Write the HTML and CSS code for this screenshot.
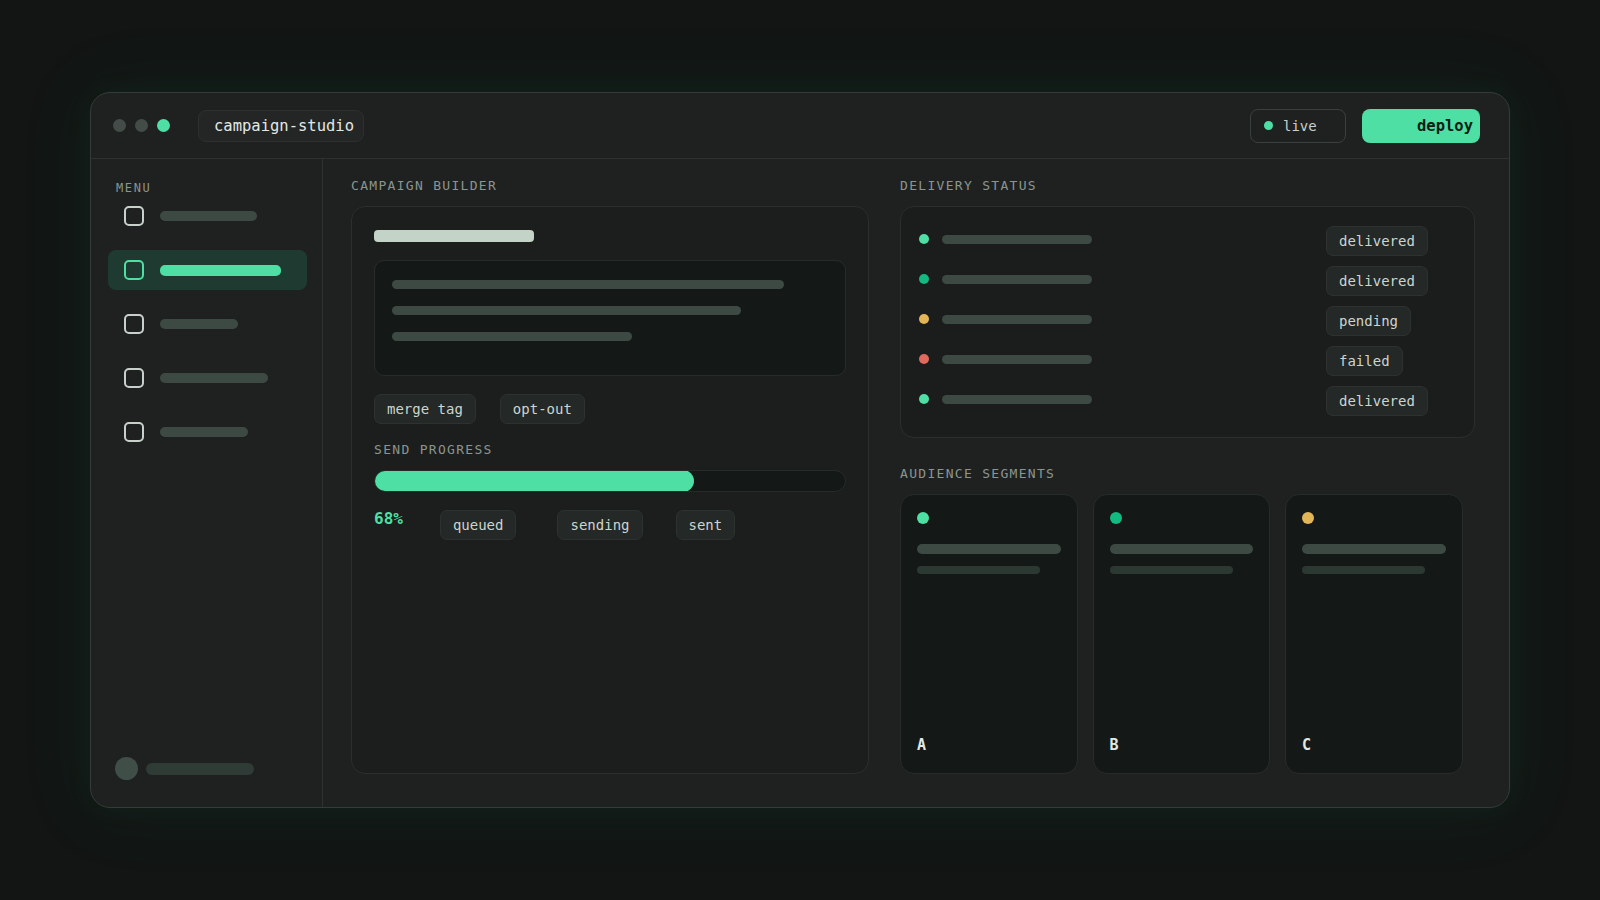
FILE: index.html
```html
<!DOCTYPE html>
<html>
<head>
<meta charset="utf-8">
<link rel="stylesheet" href="styles.css">
</head>
<body>
<div class="window">
  <header class="titlebar">
    <div class="dots">
      <span class="dot"></span><span class="dot"></span><span class="dot dot-on"></span>
    </div>
    <div class="title-pill">campaign-studio</div>
    <div class="spacer"></div>
    <div class="live"><span class="live-dot"></span>live</div>
    <button class="deploy">deploy</button>
  </header>
  <div class="body">
    <aside class="sidebar">
      <div class="menu-label">MENU</div>
      <div class="menu-item"><span class="mi-icon"></span><span class="mi-bar" style="width:97px"></span></div>
      <div class="menu-item active"><span class="mi-icon"></span><span class="mi-bar" style="width:121px"></span></div>
      <div class="menu-item"><span class="mi-icon"></span><span class="mi-bar" style="width:78px"></span></div>
      <div class="menu-item"><span class="mi-icon"></span><span class="mi-bar" style="width:108px"></span></div>
      <div class="menu-item"><span class="mi-icon"></span><span class="mi-bar" style="width:88px"></span></div>
      <div class="side-footer"><span class="avatar"></span><span class="footer-bar"></span></div>
    </aside>
    <main class="main">
      <section class="col">
        <div class="section-label">CAMPAIGN BUILDER</div>
        <div class="card builder">
          <div class="builder-title"></div>
          <div class="textbox">
            <div class="line" style="width:392px"></div>
            <div class="line" style="width:349px"></div>
            <div class="line" style="width:240px"></div>
          </div>
          <div class="tags">
            <span class="chip">merge tag</span>
            <span class="chip">opt-out</span>
          </div>
          <div class="section-label progress-label">SEND PROGRESS</div>
          <div class="progress"><div class="progress-fill" style="width:68%"></div></div>
          <div class="progress-row">
            <span class="pct">68%</span>
            <span class="chip">queued</span>
            <span class="chip chip-sending">sending</span>
            <span class="chip chip-sent">sent</span>
          </div>
        </div>
      </section>
      <section class="col">
        <div class="section-label">DELIVERY STATUS</div>
        <div class="card status">
          <div class="status-row"><span class="sdot green"></span><span class="sbar"></span><span></span><span class="chip">delivered</span></div>
          <div class="status-row"><span class="sdot emerald"></span><span class="sbar"></span><span></span><span class="chip">delivered</span></div>
          <div class="status-row"><span class="sdot yellow"></span><span class="sbar"></span><span></span><span class="chip">pending</span></div>
          <div class="status-row"><span class="sdot red"></span><span class="sbar"></span><span></span><span class="chip">failed</span></div>
          <div class="status-row"><span class="sdot green"></span><span class="sbar"></span><span></span><span class="chip">delivered</span></div>
        </div>
        <div class="section-label seg-label">AUDIENCE SEGMENTS</div>
        <div class="segments">
          <div class="seg"><span class="seg-dot green"></span><span class="seg-bar1"></span><span class="seg-bar2"></span><span class="seg-name">A</span></div>
          <div class="seg"><span class="seg-dot emerald"></span><span class="seg-bar1"></span><span class="seg-bar2"></span><span class="seg-name">B</span></div>
          <div class="seg"><span class="seg-dot yellow"></span><span class="seg-bar1"></span><span class="seg-bar2"></span><span class="seg-name">C</span></div>
        </div>
      </section>
    </main>
  </div>
</div>
</body>
</html>
```

FILE: styles.css
```css
* { box-sizing: border-box; }
html, body { margin: 0; padding: 0; }
body {
  width: 1600px;
  height: 900px;
  background: #121514;
  display: flex;
  align-items: center;
  justify-content: center;
  font-family: "DejaVu Sans Mono", "Liberation Mono", monospace;
  color: #cdd5d0;
}
.window {
  width: 1420px;
  height: 716px;
  background: #1f2120;
  border: 1px solid #353c38;
  border-radius: 20px;
  box-shadow: 0 0 70px 10px rgba(40, 150, 100, 0.07), 0 0 30px rgba(40, 150, 100, 0.05);
  display: flex;
  flex-direction: column;
  overflow: hidden;
}
.titlebar {
  height: 66px;
  flex: none;
  border-bottom: 1px solid #2d322f;
  display: flex;
  align-items: center;
  padding: 0 29px 0 22px;
}
.dots { display: flex; gap: 9px; }
.dot { width: 13px; height: 13px; border-radius: 50%; background: #444c48; }
.dot-on { background: #4ddfa3; }
.title-pill {
  margin-left: 28px;
  height: 32px;
  padding: 0 9px 0 15px;
  display: flex;
  align-items: center;
  background: #232624;
  border: 1px solid #2c312e;
  border-radius: 8px;
  font-size: 15.5px;
  color: #e2e8e4;
}
.spacer { flex: 1; }
.live {
  width: 96px;
  height: 34px;
  border: 1px solid #3a403d;
  border-radius: 8px;
  display: flex;
  align-items: center;
  padding-left: 13px;
  gap: 10px;
  font-size: 14px;
  color: #c8d0cb;
}
.live-dot { width: 9px; height: 9px; border-radius: 50%; background: #4ddfa3; }
.deploy {
  margin-left: 16px;
  width: 118px;
  height: 34px;
  border: none;
  border-radius: 8px;
  background: #4ddfa3;
  color: #0f1d16;
  font-family: "DejaVu Sans Mono", monospace;
  font-weight: bold;
  font-size: 15.5px;
  text-align: right;
  padding: 0 7px 0 0;
}
.body { flex: 1; display: flex; min-height: 0; }
.sidebar {
  width: 232px;
  flex: none;
  border-right: 1px solid #2d322f;
  padding: 22px 15px 27px 17px;
  display: flex;
  flex-direction: column;
  gap: 14px;
}
.menu-label {
  font-size: 12px;
  line-height: 14px;
  letter-spacing: 1.6px;
  color: #8b9590;
  padding-left: 8px;
  margin-bottom: -13px;
}
.menu-item {
  height: 40px;
  display: flex;
  align-items: center;
  gap: 16px;
  padding: 0 16px;
  border-radius: 8px;
  flex: none;
}
.mi-icon {
  width: 20px;
  height: 20px;
  border: 2px solid #c8d0cb;
  border-radius: 5px;
  flex: none;
}
.mi-bar { height: 10px; border-radius: 5px; background: #3d4a44; }
.menu-item.active { background: #1f3a30; }
.menu-item.active .mi-icon { border-color: #4ddfa3; }
.menu-item.active .mi-bar { background: #4ddfa3; height: 11px; }
.side-footer {
  margin-top: auto;
  display: flex;
  align-items: center;
  gap: 8px;
  padding-left: 7px;
}
.avatar { width: 23px; height: 23px; border-radius: 50%; background: #3f4f47; }
.footer-bar { width: 108px; height: 12px; border-radius: 6px; background: #2f3b35; }
.main {
  flex: 1;
  display: grid;
  grid-template-columns: 518px 575px;
  column-gap: 31px;
  padding: 19px 34px 33px 28px;
}
.col { display: flex; flex-direction: column; min-height: 0; }
.section-label {
  font-size: 13px;
  line-height: 16px;
  letter-spacing: 1.3px;
  color: #8b9590;
  margin-bottom: 12px;
}
.card {
  border: 1px solid #2a2f2c;
  border-radius: 14px;
  background: #1b1e1d;
}
.builder { flex: 1; padding: 23px 22px; }
.builder-title { width: 160px; height: 12px; border-radius: 4px; background: #c3d3c7; }
.textbox {
  margin-top: 18px;
  height: 116px;
  background: #141816;
  border: 1px solid #272c29;
  border-radius: 10px;
  padding: 19px 17px;
  display: flex;
  flex-direction: column;
  gap: 17px;
}
.line { height: 9px; border-radius: 5px; background: #3d4a44; }
.tags { margin-top: 18px; display: flex; gap: 24px; }
.chip {
  height: 30px;
  display: inline-flex;
  align-items: center;
  padding: 0 12px;
  background: #242826;
  border: 1px solid #2d322f;
  border-radius: 7px;
  font-size: 14px;
  color: #cdd5d0;
  white-space: nowrap;
}
.progress-label { margin-top: 18px; }
.progress {
  height: 22px;
  border-radius: 11px;
  background: #141816;
  border: 1px solid #262b28;
  overflow: hidden;
}
.progress-fill { border-radius: 11px; background: #4ddfa3; margin: -1px 0 0 -1px; height: 22px; }
.progress-row { margin-top: 18px; display: flex; align-items: flex-start; gap: 37px; }
.pct { font-size: 16px; font-weight: bold; color: #4ddfa3; line-height: 18px; margin-top: 0; }
.chip-sending { margin-left: 4px; }
.chip-sent { margin-left: -4px; }
.status {
  height: 232px;
  flex: none;
  padding: 19px 46px 19px 18px;
  display: flex;
  flex-direction: column;
  gap: 10px;
  background: #1a1d1c;
}
.status-row {
  display: grid;
  grid-template-columns: 10px 150px 1fr 102px;
  column-gap: 13px;
  align-items: center;
  justify-items: start;
  height: 30px;
}
.sdot { width: 10px; height: 10px; border-radius: 50%; margin-bottom: 4px; }
.sbar { width: 150px; height: 9px; border-radius: 5px; background: #3d4a44; margin-bottom: 4px; }
.green { background: #4ddfa3; }
.emerald { background: #12b981; }
.yellow { background: #e3b556; }
.red { background: #e0695b; }
.seg-label { margin-top: 28px; }
.segments {
  flex: 1;
  display: grid;
  grid-template-columns: repeat(3, 177.5px);
  column-gap: 15px;
}
.seg {
  background: #141816;
  border: 1px solid #272c29;
  border-radius: 14px;
  padding: 17px 16px 19px;
  display: flex;
  flex-direction: column;
  align-items: flex-start;
}
.seg-dot { width: 12px; height: 12px; border-radius: 50%; }
.seg-bar1 { margin-top: 20px; width: 100%; height: 10px; border-radius: 5px; background: #3d4a44; }
.seg-bar2 { margin-top: 12px; width: 123px; height: 8px; border-radius: 4px; background: #2c3832; }
.seg-name { margin-top: auto; font-size: 15px; line-height: 18px; font-weight: bold; color: #e2e8e4; }
```
